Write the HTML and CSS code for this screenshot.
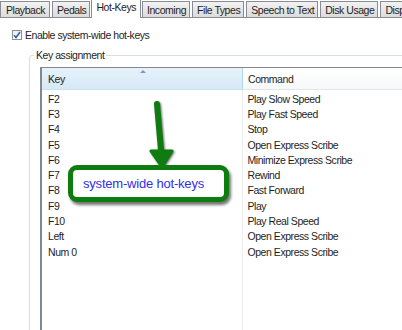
FILE: index.html
```html
<!DOCTYPE html>
<html lang="en">
<head>
  <meta charset="UTF-8">
  <title>Hot-Keys</title>
  <link rel="stylesheet" href="styles.css">
</head>
<body>
  <div class="tabs">
    <span class="tab">Playback</span>
    <span class="tab">Pedals</span>
    <span class="tab active">Hot-Keys</span>
    <span class="tab">Incoming</span>
    <span class="tab">File Types</span>
    <span class="tab">Speech to Text</span>
    <span class="tab">Disk Usage</span>
    <span class="tab">Display</span>
  </div>

  <label class="check">
    <span class="box">
      <svg width="8" height="8" viewBox="0 0 8 8"><polyline points="1,4.2 3,6.5 7,1" fill="none" stroke="#2a5ca8" stroke-width="1.5"/></svg>
    </span>
    Enable system-wide hot-keys
  </label>

  <fieldset class="group">
    <legend>Key assignment</legend>
    <div class="list">
      <table>
        <tr>
          <th class="key sorted">Key<span class="caret"></span></th>
          <th>Command</th>
        </tr>
        <tr><td class="key">F2</td><td>Play Slow Speed</td></tr>
        <tr><td class="key">F3</td><td>Play Fast Speed</td></tr>
        <tr><td class="key">F4</td><td>Stop</td></tr>
        <tr><td class="key">F5</td><td>Open Express Scribe</td></tr>
        <tr><td class="key">F6</td><td>Minimize Express Scribe</td></tr>
        <tr><td class="key">F7</td><td>Rewind</td></tr>
        <tr><td class="key">F8</td><td>Fast Forward</td></tr>
        <tr><td class="key">F9</td><td>Play</td></tr>
        <tr><td class="key">F10</td><td>Play Real Speed</td></tr>
        <tr><td class="key">Left</td><td>Open Express Scribe</td></tr>
        <tr><td class="key">Num 0</td><td>Open Express Scribe</td></tr>
      </table>
    </div>
  </fieldset>

  <!-- annotation drawn over the dialog -->
  <svg class="arrow" width="40" height="80" viewBox="140 95 40 80">
    <line x1="157" y1="104" x2="161.5" y2="156" stroke="#0e7c0e" stroke-width="6" stroke-linecap="round"/>
    <polygon points="151,151 172,151 162,167" fill="#0e7c0e" stroke="#0e7c0e" stroke-width="3" stroke-linejoin="round"/>
  </svg>
  <div class="callout">system-wide hot-keys</div>
</body>
</html>
```

FILE: styles.css
```css
body { margin: 0; background: #fff; font-family: "Liberation Sans", Arial, sans-serif; font-size: 10.5px; letter-spacing: -0.45px; color: #1e1e1e; width: 402px; height: 330px; overflow: hidden; position: relative; }

.tabs { display: flex; align-items: flex-end; height: 17px; border-bottom: 1px solid #898c95; }
.tab { height: 16px; line-height: 16px; padding: 0 3px 0 4px; margin-right: 2px; border: 1px solid #898c95; border-bottom: none; background: linear-gradient(#f2f2f2, #dcdcdc); white-space: nowrap; box-sizing: border-box; }
.tab:first-child { padding: 0 4px 0 5px; }
.tab.active { height: 19px; line-height: 15px; margin: 0 1px -1px -1px; background: #fff; padding: 0 4px 3px 4px; }

.check { display: flex; align-items: center; gap: 3px; height: 12px; margin: 11px 0 0 12px; }
.box { width: 10px; height: 10px; box-sizing: border-box; border: 1px solid #8f8f8f; background: linear-gradient(#eee, #fcfcfc); display: flex; align-items: center; justify-content: center; }

.group { margin: 8px 0 0 29px; padding: 5px 0 0 10px; width: 420px; height: 300px; border: 1px solid #d5dfe5; border-radius: 3px; }
.group legend { padding: 0 2px; margin-left: -6px; line-height: 13px; }

.list { height: 280px; border: 1px solid #828790; border-left-width: 2px; background: linear-gradient(to right, transparent 200px, #ececec 200px, #ececec 201px, transparent 201px); }
table { border-collapse: collapse; width: 100%; }
th { height: 21px; text-align: left; font-weight: normal; padding: 0 0 0 5px; border-bottom: 1px solid #e5e5e5; background: linear-gradient(#fff, #f7f8fa); }
th.sorted { position: relative; background: linear-gradient(#e6f2fa, #d6e9f6); border-right: 1px solid #b4d6ee; border-bottom-color: #cde2f1; }
.caret { position: absolute; left: 98px; top: 2px; width: 0; height: 0; border-left: 3px solid transparent; border-right: 3px solid transparent; border-bottom: 3px solid #7e9ab8; }
td { height: 15.3px; padding: 0 0 0 5px; white-space: nowrap; }
.key { width: 194px; padding-left: 6px; }
tr:nth-child(2) td { padding-top: 1px; }

.arrow { position: absolute; left: 140px; top: 95px; filter: drop-shadow(1.5px 1.5px 1px rgba(0, 0, 0, 0.6)); }
.callout { position: absolute; left: 68px; top: 165px; width: 161px; height: 37px; box-sizing: border-box; border: 5px solid #0e7c0e; border-radius: 9px; background: #fff; box-shadow: 2px 3px 3px rgba(0, 0, 0, 0.55); padding-left: 10px; display: flex; align-items: center; font-size: 13px; letter-spacing: -0.2px; color: #3030e8; }
```
